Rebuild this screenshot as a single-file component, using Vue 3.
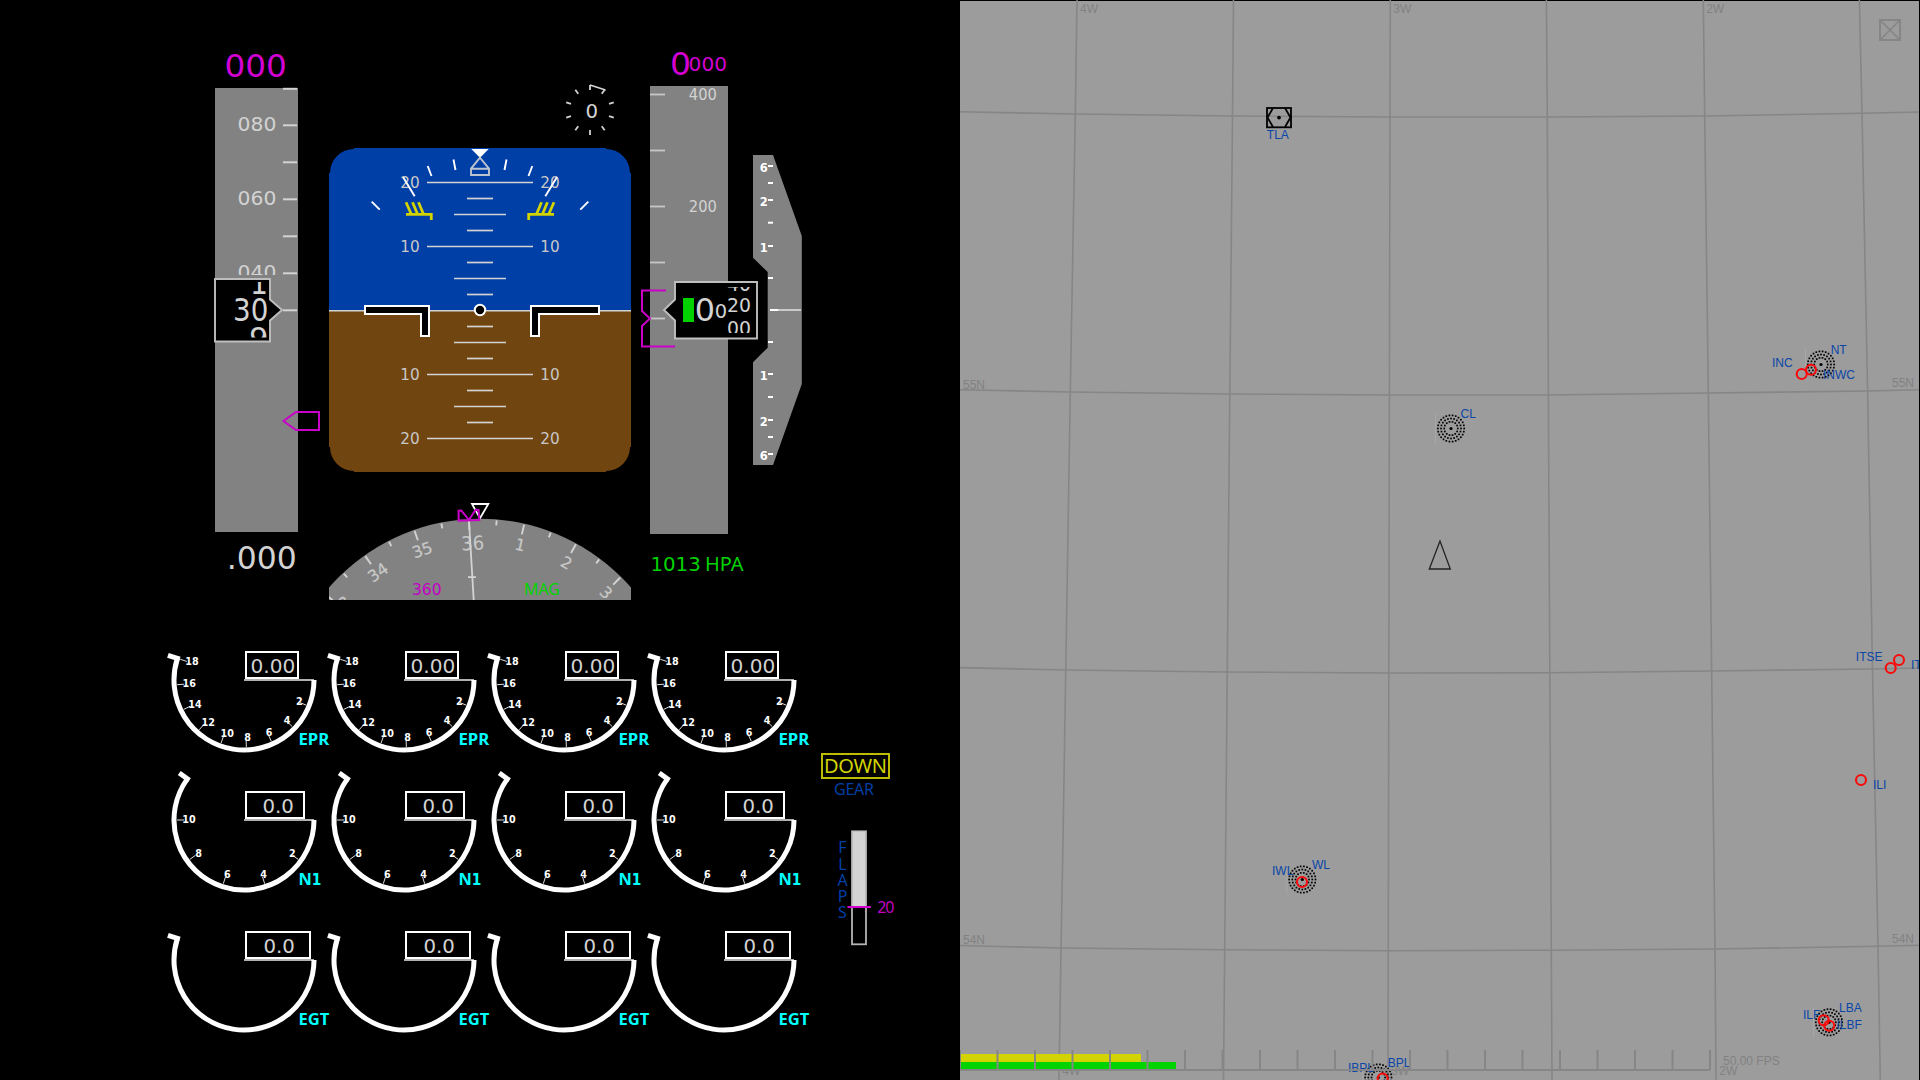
<script setup>
const rad = (deg) => (deg * Math.PI) / 180
const polar = (r, deg) => [r * Math.cos(rad(deg)), r * Math.sin(rad(deg))]

/* ---- Primary flight display ---- */
const speedTicks = [88.5, 125, 162, 199, 236, 273, 310]
const speedLabels = [
  { y: 131, t: '080' },
  { y: 205, t: '060' },
  { y: 279, t: '040' },
]
const altTicks = [94.5, 150.5, 206.5, 262.5, 318.5]

const pitchLines = []
for (let k = -8; k <= 8; k++) {
  if (k === 0) continue
  const half = k % 4 === 0 ? 53 : k % 2 === 0 ? 26 : 13
  pitchLines.push({ y: 310.5 + k * 16, half })
}
const pitchLabels = [
  { y: 188, t: '20' },
  { y: 252, t: '10' },
  { y: 380, t: '10' },
  { y: 444, t: '20' },
]
const rollTicks = [
  [371.7, 201.7, 379.7, 209.7],
  [403, 177, 414.7, 196.3],
  [427.7, 166, 431.5, 176],
  [453.5, 159.5, 455.5, 170],
]
const dialTicks = [18, 54, 90, 126, 162, 198, 234, 270, 306, 342].map((a) => {
  const [x1, y1] = polar(20, a)
  const [x2, y2] = polar(25, a)
  return { x1, y1, x2, y2 }
})
const headingTicks = []
for (let k = -6; k <= 6; k++) {
  headingTicks.push({ a: -3.2 + k * 8, len: k % 2 === 0 ? 10 : 5 })
}
const headingLabels = [
  { a: -50.9, t: '33' },
  { a: -34.9, t: '34' },
  { a: -18.9, t: '35' },
  { a: 13, t: '1' },
  { a: 29, t: '2' },
  { a: 45, t: '3' },
]
const vsiTicks = [166, 183, 200, 222.7, 246, 278, 342, 374, 397, 420, 437, 454]
const vsiLabels = [
  { y: 171.5, t: '6' },
  { y: 205.7, t: '2' },
  { y: 252, t: '1' },
  { y: 380.2, t: '1' },
  { y: 426, t: '2' },
  { y: 460, t: '6' },
]

/* ---- Engine gauges ---- */
const dial = (sweep) => {
  const [x, y] = polar(70, sweep)
  const [ax, ay] = polar(67.5, sweep)
  const [bx, by] = polar(80, sweep)
  return { arc: `M70 0 A70 70 0 ${sweep > 180 ? 1 : 0} 1 ${x} ${y}`, end: `M${ax} ${ay} L${bx} ${by}` }
}
const marks = (step, list) =>
  list.map(([t, x, y], i) => {
    const [x1, y1] = polar(67, step * (i + 1))
    const [x2, y2] = polar(60, step * (i + 1))
    return { t, x, y, x1, y1, x2, y2 }
  })
const rows = [
  {
    name: 'EPR', value: '0.00', vx: 6.5, box: 52, ...dial(198),
    marks: marks(22, [
      ['2', 55.3, 20.7], ['4', 43, 40], ['6', 25, 52.3], ['8', 3.7, 57], ['10', -16.7, 53.3],
      ['12', -35.7, 42], ['14', -49, 24.3], ['16', -54.7, 3.3], ['18', -52, -18.7],
    ]),
  },
  {
    name: 'N1', value: '0.0', vx: 18.5, box: 58, ...dial(216),
    marks: marks(36, [['2', 48.3, 33.3], ['4', 19.7, 54.3], ['6', -16.7, 54.3], ['8', -45.3, 33], ['10', -55, -1]]),
  },
  { name: 'EGT', value: '0.0', vx: 19.5, box: 64, ...dial(198), marks: [] },
]
const flaps = [...'FLAPS']

/* ---- Navigation map ---- */
const meridians = [
  '1077,0 1075.3,114 1070.3,391 1063,840 1061,948 1059,1080',
  '1233.5,0 1232.5,116 1229.8,394 1225.7,840 1223.5,1080',
  '1390.3,0 1390,117 1389.3,440 1388.5,840 1388,1080',
  '1546.4,0 1547.3,117 1548.6,440 1551.3,950 1552,1080',
  '1703.3,0 1704.7,116 1708.3,393 1715,949 1716,1080',
  '1859.4,0 1862,113 1867.6,391 1872.5,669 1878,946 1880.3,1080',
]
const parallels = [
  '960,111.8 1075.3,114 1232.5,116 1390,117 1547,117 1704.7,116 1862,113.3 1920,112',
  '960,389.7 1070.5,392 1230,394 1389.5,395 1548.5,395 1708,393 1867.5,391 1920,389.8',
  '960,667.6 1066,670 1227.5,672 1389,673 1550,672.8 1711,671 1872.5,669 1920,668',
  '960,945.5 1061,948 1225,949.7 1388.5,950.8 1551.5,950.2 1715,949 1878,946.3 1920,945.2',
]
const gridLabels = [
  [1080, 13.2, '4W'], [1393.3, 13.2, '3W'], [1706.2, 13.2, '2W'],
  [963, 389, '55N'], [963, 944, '54N'], [1892, 387, '55N'], [1892, 943.2, '54N'],
  [1062.3, 1075, '4W'], [1391, 1075, '3W'], [1719.3, 1075, '2W'], [1723, 1065, '50.00 FPS'],
]
const ndbs = [[1821, 364.5], [1451, 428.5], [1302.3, 879.5], [1829, 1022.3], [1378.3, 1077.5]]
const ndbDots = []
for (const [r, n] of [[13.2, 26], [10, 20], [6.8, 14]]) {
  for (let i = 0; i < n; i++) ndbDots.push(polar(r, (360 / n) * i))
}
const ils = [
  [1801.7, 374], [1811, 369.8], [1890.7, 668], [1899, 660], [1861, 780],
  [1302, 882], [1823.7, 1020.2], [1829.3, 1025.7], [1382.7, 1078.5],
]
const fixes = [
  [1266.8, 139, 'TLA'], [1830.7, 353.7, 'NT'], [1772, 367, 'INC'], [1823, 378.8, 'INWC'],
  [1460.6, 418, 'CL'], [1855.8, 661.3, 'ITSE'], [1911, 669, 'IT'], [1873, 789, 'ILI'],
  [1312, 869, 'WL'], [1272, 875, 'IWL'], [1839, 1012, 'LBA'], [1803, 1019, 'ILF'],
  [1836.5, 1029.4, 'ILBF'], [1387.8, 1067, 'BPL'], [1348, 1072, 'IBPL'],
]
const rulerTicks = Array.from({ length: 21 }, (_, i) => 960 + i * 37.5)
</script>

<template>
  <main class="cockpit">
    <section class="panel">
      <svg class="pfd" viewBox="0 0 960 640" width="960" height="640">
        <defs>
          <clipPath id="tape-clip"><rect x="215" y="88" width="90" height="187" /></clipPath>
          <clipPath id="speed-clip"><rect x="216" y="282" width="60" height="55.5" /></clipPath>
          <clipPath id="alt-clip"><rect x="677" y="287" width="79" height="46" /></clipPath>
          <clipPath id="rose-clip"><rect x="329" y="480" width="302" height="120" /></clipPath>
          <clipPath id="horizon-clip">
            <path d="M354 148H606V149A24 24 0 0 1 630 173H631V447H630A24 24 0 0 1 606 471V472H354V471A24 24 0 0 1 330 447H329V173H330A24 24 0 0 1 354 149Z" />
          </clipPath>
        </defs>

        <!-- Speed tape -->
        <text class="mag" x="224.4" y="77" font-size="31.5" textLength="62.5" lengthAdjust="spacingAndGlyphs">000</text>
        <rect class="tape" x="215" y="88" width="83" height="444" />
        <g class="line">
          <path v-for="y in speedTicks" :key="y" :d="`M283 ${y + 0.3}H297`" />
        </g>
        <g clip-path="url(#tape-clip)">
          <text v-for="l in speedLabels" :key="l.t" class="pale" x="237.6" :y="l.y - 0.2" font-size="20" textLength="38.8" lengthAdjust="spacingAndGlyphs">{{ l.t }}</text>
        </g>
        <path class="readout" d="M215 279H270V299.5L282 310L270 320.5V341.5H215Z" />
        <g class="pale" clip-path="url(#speed-clip)">
          <text x="233" y="321.3" font-size="32" textLength="35.3" lengthAdjust="spacingAndGlyphs">30</text>
          <text x="250" y="293.7" font-size="32" textLength="18" lengthAdjust="spacingAndGlyphs">1</text>
          <text x="249" y="348.5" font-size="30" textLength="19.5" lengthAdjust="spacingAndGlyphs">9</text>
        </g>
        <path class="bug" d="M283.5 421L296 412H319V430H296Z" />
        <text class="pale" x="226.8" y="568.7" font-size="31.5" textLength="70" lengthAdjust="spacingAndGlyphs">.000</text>

        <!-- Attitude -->
        <g clip-path="url(#horizon-clip)">
          <rect x="329" y="148" width="302" height="163" fill="#003fa6" />
          <rect x="329" y="311" width="302" height="161" fill="#704510" />
          <path d="M329 310.7H631" stroke="#d3d3d3" stroke-width="1.6" />
        </g>
        <g stroke="#d3d3d3" stroke-width="1.7">
          <path v-for="p in pitchLines" :key="p.y" :d="`M${480 - p.half} ${p.y}H${480 + p.half}`" />
        </g>
        <g class="soft" font-size="16">
          <template v-for="p in pitchLabels" :key="p.y">
            <text x="400.3" :y="p.y" textLength="19.4" lengthAdjust="spacingAndGlyphs">{{ p.t }}</text>
            <text x="540.3" :y="p.y" textLength="19.4" lengthAdjust="spacingAndGlyphs">{{ p.t }}</text>
          </template>
        </g>
        <g stroke="#fff" stroke-width="1.9">
          <template v-for="r in rollTicks" :key="r[0]">
            <path :d="`M${r[0]} ${r[1]}L${r[2]} ${r[3]}`" />
            <path :d="`M${960 - r[0]} ${r[1]}L${960 - r[2]} ${r[3]}`" />
          </template>
        </g>
        <path d="M471.3 149H488.7L480 157.7Z" fill="#fff" />
        <path d="M480 157.7L471 168.7V175H489V168.7ZM471 168.7H489" fill="none" stroke="#bcc4d0" stroke-width="1.9" />
        <g fill="none" stroke="#d3d300" stroke-width="2.8">
          <path d="M406 214.3H431.3V220M406 202.3L411 213.5M412.5 202.3L417.3 213.5M418.5 202.3L423.2 213.5" />
          <path d="M554 214.3H528.7V220M554 202.3L549 213.5M547.5 202.3L542.7 213.5M541.5 202.3L536.8 213.5" />
        </g>
        <g fill="#000" stroke="#fff" stroke-width="2">
          <path d="M365 306H429V336H421V314H365Z" />
          <path d="M531 306H599V314H539V336H531Z" />
          <circle cx="480" cy="310" r="5.2" />
        </g>

        <!-- Sideslip dial -->
        <g transform="translate(590 110)" stroke="#d3d3d3" stroke-width="1.8" fill="none">
          <path v-for="(d, i) in dialTicks" :key="i" :d="`M${d.x1} ${d.y1}L${d.x2} ${d.y2}`" />
          <path d="M0 -25L15.5 -20" />
        </g>
        <text class="pale" x="585.6" y="117.5" font-size="20" textLength="12.6" lengthAdjust="spacingAndGlyphs">0</text>

        <!-- Altitude tape -->
        <text class="mag" x="670" y="75" font-size="31.5" textLength="21" lengthAdjust="spacingAndGlyphs">0</text>
        <text class="mag" x="688.6" y="71.2" font-size="20" textLength="38.4" lengthAdjust="spacingAndGlyphs">000</text>
        <rect class="tape" x="650" y="86" width="78" height="448" />
        <g stroke="#c8c8c8" stroke-width="1.8">
          <path v-for="y in altTicks" :key="y" :d="`M650 ${y}H665`" />
        </g>
        <g class="pale" font-size="16">
          <text x="688.8" y="99.7" textLength="28" lengthAdjust="spacingAndGlyphs">400</text>
          <text x="688.8" y="211.7" textLength="28" lengthAdjust="spacingAndGlyphs">200</text>
        </g>
        <path class="bug" d="M666 290.5H642V311L650 318.5L642 326V346.5H675" />
        <path class="readout" d="M675 282H757V338.5H675V320.5L664 310L675 299.5Z" />
        <rect x="683" y="298" width="11" height="24" fill="#00d300" />
        <g class="pale" clip-path="url(#alt-clip)">
          <text x="694.8" y="321.3" font-size="31.5" textLength="20.3" lengthAdjust="spacingAndGlyphs">0</text>
          <text x="714.7" y="317.5" font-size="19.5" textLength="12.4" lengthAdjust="spacingAndGlyphs">0</text>
          <g font-size="19.5">
            <text x="727" y="290.7" textLength="24" lengthAdjust="spacingAndGlyphs">40</text>
            <text x="727" y="312.3" textLength="24" lengthAdjust="spacingAndGlyphs">20</text>
            <text x="727" y="334.7" textLength="24" lengthAdjust="spacingAndGlyphs">00</text>
          </g>
        </g>
        <g class="green" font-size="20">
          <text x="650.4" y="571" textLength="50.4" lengthAdjust="spacingAndGlyphs">1013</text>
          <text class="letters" x="705" y="571" textLength="38.5">HPA</text>
        </g>

        <!-- Vertical speed -->
        <path class="tape" d="M753 155H773L801.8 236V384L773 465H753V362.3L767.7 347.7V272L753 257.7Z" />
        <g stroke="#fff" stroke-width="2">
          <path v-for="y in vsiTicks" :key="y" :d="`M768 ${y}H773`" />
          <path d="M770 310H779" />
        </g>
        <path d="M778 310H801" stroke="#d3d3d3" stroke-width="1.8" />
        <g class="strong" font-size="13" fill="#fff">
          <text v-for="l in vsiLabels" :key="l.y" x="759.7" :y="l.y" textLength="8" lengthAdjust="spacingAndGlyphs">{{ l.t }}</text>
        </g>

        <!-- Heading rose -->
        <g clip-path="url(#rose-clip)">
          <circle cx="480" cy="718.7" r="200" fill="#828282" />
          <g transform="translate(480 718.7)" stroke="#d3d3d3" stroke-width="1.9">
            <path v-for="h in headingTicks" :key="h.a" :d="`M0 -199V${-199 + h.len}`" :transform="`rotate(${h.a})`" />
          </g>
          <g class="soft rose" transform="translate(480 718.7)" font-size="16" text-anchor="middle">
            <text v-for="h in headingLabels" :key="h.a" y="-172.7" :transform="`rotate(${h.a})`">{{ h.t }}</text>
          </g>
          <text class="soft" transform="translate(473 550) rotate(-3)" font-size="19.3" textLength="23" lengthAdjust="spacingAndGlyphs" text-anchor="middle">36</text>
          <text class="mag thin" x="412" y="595" font-size="16" textLength="29.6" lengthAdjust="spacingAndGlyphs">360</text>
          <text class="green letters" x="524" y="595" font-size="16" textLength="36">MAG</text>
          <path d="M469 521L473.7 600M468 577.2H476" stroke="#d3d3d3" stroke-width="1.8" />
        </g>
        <path d="M472 504H488.3L480 518.3Z" fill="none" stroke="#fff" stroke-width="1.8" />
        <path class="bug" d="M458.6 520.6V510.7L461.3 510.5L469 519.8L475.6 509.8L478.6 510L479.3 520Z" />
      </svg>

      <div class="lower">
        <div class="gauges">
          <template v-for="row in rows" :key="row.name">
            <svg v-for="n in 4" :key="n" class="gauge" viewBox="-78 -40 160 140" width="160" height="140">
              <path d="M0 0H70" stroke="#b0b0b0" stroke-width="2" />
              <g fill="none" stroke="#fff" stroke-width="5">
                <path :d="row.arc" />
                <path :d="row.end" />
              </g>
              <g v-for="m in row.marks" :key="m.t">
                <path :d="`M${m.x1} ${m.y1}L${m.x2} ${m.y2}`" stroke="#ddd" stroke-width="1" />
                <text class="num" :x="m.x" :y="m.y + 4" :textLength="m.t.length * 6.7" lengthAdjust="spacingAndGlyphs">{{ m.t }}</text>
              </g>
              <rect x="2" y="-28" :width="row.box" height="26" fill="#000" stroke="#fff" stroke-width="2" />
              <text class="pale" :x="row.vx" y="-7.5" font-size="20" :textLength="row.value.length === 4 ? 44.8 : 31.4" lengthAdjust="spacingAndGlyphs">{{ row.value }}</text>
              <text v-if="row.name === 'N1'" class="unit" x="54.4" y="65">N<tspan class="one" textLength="9.6" lengthAdjust="spacingAndGlyphs">1</tspan></text>
              <text v-else class="unit" x="54.4" y="65" textLength="30.8" lengthAdjust="spacingAndGlyphs">{{ row.name }}</text>
            </svg>
          </template>
        </div>

        <svg class="config" viewBox="810 740 90 220" width="90" height="220">
          <rect x="822" y="754" width="67" height="24" fill="none" stroke="#bcbc00" stroke-width="2" />
          <text class="letters" x="824" y="773.3" font-size="20" fill="#d3d300" textLength="63">DOWN</text>
          <g class="blue letters" font-size="16">
            <text x="834" y="795" textLength="40">GEAR</text>
            <text v-for="(c, i) in flaps" :key="c" x="842.5" text-anchor="middle" :y="853.3 + i * 16.2">{{ c }}</text>
          </g>
          <rect x="852" y="831.3" width="14" height="113" fill="none" stroke="#b4b4b4" stroke-width="1.8" />
          <rect x="852.5" y="831.5" width="13" height="75" fill="#d3d3d3" />
          <path d="M847.5 907H871" stroke="#d300d3" stroke-width="2" />
          <text class="thin mag letters" x="877.3" y="912.5" font-size="16" textLength="17">20</text>
        </svg>
      </div>
    </section>

    <svg class="map" viewBox="960 0 960 1080" width="960" height="1080">
      <rect x="960" y="1" width="959" height="1079" fill="#9c9c9c" />
      <g fill="none" stroke="#868686" stroke-width="1.6">
        <polyline v-for="p in meridians" :key="p" :points="p" />
        <polyline v-for="p in parallels" :key="p" :points="p" />
      </g>
      <g class="grid-label">
        <text v-for="(g, i) in gridLabels" :key="i" :x="g[0]" :y="g[1]">{{ g[2] }}</text>
      </g>

      <g v-for="(n, i) in ndbs" :key="i" :transform="`translate(${n[0]} ${n[1]})`">
        <path d="M-15.5 -15V15" stroke="#a8a8a8" stroke-width="1" />
        <rect v-for="(d, k) in ndbDots" :key="k" :x="d[0] - 0.85" :y="d[1] - 0.85" width="1.7" height="1.7" />
        <circle r="1.6" />
      </g>
      <g fill="none" stroke="#000" stroke-width="1.8">
        <rect x="1267" y="108" width="24" height="19.3" />
        <path d="M1273 108L1267.5 117.5L1273 127M1285 108L1290.5 117.5L1285 127" />
      </g>
      <circle cx="1279" cy="117.6" r="1.9" />
      <g fill="none" stroke="#fa0a0a" stroke-width="2.1">
        <circle v-for="(c, i) in ils" :key="i" :cx="c[0]" :cy="c[1]" r="5" />
      </g>
      <g class="fix">
        <text v-for="f in fixes" :key="f[2]" :x="f[0]" :y="f[1]">{{ f[2] }}</text>
      </g>
      <path d="M1440 541L1429.3 569H1450.3Z" fill="none" stroke="#222" stroke-width="1.3" />

      <rect x="961" y="1054" width="180" height="8" fill="#d3d300" />
      <rect x="961" y="1062" width="215" height="7.3" fill="#00d300" />
      <g fill="none" stroke="#868686" stroke-width="2">
        <path d="M960 1070H1710" />
        <path v-for="x in rulerTicks" :key="x" :d="`M${x} 1050V1070`" />
        <rect x="1880" y="20" width="20" height="20" />
        <path d="M1880 20L1900 40M1900 20L1880 40" stroke-width="1.7" />
      </g>
      <path d="M1919.5 0V1080" stroke="#000" />
    </svg>
  </main>
</template>

<style>
body {
  margin: 0;
  background: #000;
}
</style>

<style scoped>
.cockpit {
  display: flex;
  width: 1920px;
  height: 1080px;
  overflow: hidden;
  background: #000;
}
.panel {
  display: flex;
  flex-direction: column;
  width: 960px;
  height: 1080px;
}
svg {
  display: block;
  flex: none;
  font-family: "DejaVu Sans", sans-serif;
}
.lower {
  display: flex;
  padding-left: 166px;
}
.gauges {
  display: grid;
  grid-template-columns: repeat(4, 160px);
  grid-template-rows: repeat(3, 140px);
}
.gauge {
  overflow: visible;
}
.config {
  margin: 100px 0 0 4px;
}
.tape {
  fill: #828282;
}
.line {
  stroke: #d3d3d3;
  stroke-width: 2;
}
.readout {
  fill: #000;
  stroke: #bebebe;
  stroke-width: 1.9;
}
.bug {
  fill: none;
  stroke: #c800c8;
  stroke-width: 2;
}
.mag {
  fill: #d300d3;
}
.thin {
  fill: #c400c4;
}
.pale {
  fill: #d3d3d3;
}
.soft {
  fill: #c8c8c8;
}
.rose {
  stroke: #c8c8c8;
  stroke-width: 0.25;
}
.green {
  fill: #00d300;
}
.blue {
  fill: #003fa6;
}
.letters {
  font-family: "Noto Sans", sans-serif;
}
.strong,
.num {
  font-weight: 700;
}
.num {
  fill: #fff;
  font-size: 11.3px;
  text-anchor: middle;
}
.unit {
  fill: #0ff;
  font-family: "Noto Sans", sans-serif;
  font-size: 16.4px;
  font-weight: 700;
}
.one {
  font-family: "DejaVu Sans", sans-serif;
  font-size: 16px;
}
.grid-label,
.fix {
  font-family: "Liberation Sans", sans-serif;
  font-size: 12px;
}
.grid-label {
  fill: #828282;
}
.fix {
  fill: #0a46a8;
}
</style>
